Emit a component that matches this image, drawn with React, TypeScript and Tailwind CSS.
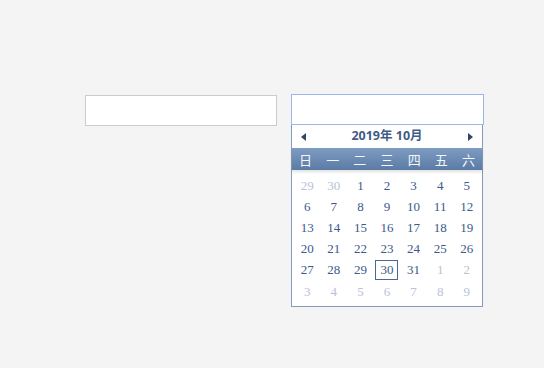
import React from "react";

const weeks: [string, boolean][][] = [
  [["29", true], ["30", true], ["1", false], ["2", false], ["3", false], ["4", false], ["5", false]],
  [["6", false], ["7", false], ["8", false], ["9", false], ["10", false], ["11", false], ["12", false]],
  [["13", false], ["14", false], ["15", false], ["16", false], ["17", false], ["18", false], ["19", false]],
  [["20", false], ["21", false], ["22", false], ["23", false], ["24", false], ["25", false], ["26", false]],
  [["27", false], ["28", false], ["29", false], ["30", false], ["31", false], ["1", true], ["2", true]],
  [["3", true], ["4", true], ["5", true], ["6", true], ["7", true], ["8", true], ["9", true]],
];

const days = ["日", "一", "二", "三", "四", "五", "六"];

export default function App() {
  return (
    <div className="w-[544px] h-[368px] bg-[#f4f4f4] pt-[95px] pl-[85px] flex gap-[14px] items-start">
      <div className="w-[192px] h-[31px] bg-white border border-[#cccccc]" />
      <div className="flex flex-col w-[193px] -mt-[1px]">
        <div className="h-[31px] bg-white border border-[#9bb7ea]" />
        <div className="w-[192px] border border-t-0 border-[#7f9cbd] bg-white pb-[4px]">
          <div className="h-[23px] flex items-center justify-between px-[9px]">
            <svg width="5" height="8" viewBox="0 0 5 8"><path d="M5 0L0 4l5 4z" fill="#2f4664" /></svg>
            <span className="text-[12.5px] font-bold text-[#3f5d86] leading-none" style={{ fontFamily: '"Noto Sans", "Noto Sans CJK SC", sans-serif' }}>2019年 10月</span>
            <svg width="5" height="8" viewBox="0 0 5 8"><path d="M0 0l5 4-5 4z" fill="#2f4664" /></svg>
          </div>
          <div className="h-[22px] bg-gradient-to-b from-[#7f9cc2] to-[#5b7ba5] grid grid-cols-7 items-center shadow-[0_2px_3px_rgba(0,0,0,0.12)]">
            {days.map((d) => (
              <span key={d} className="text-center text-[13px] text-[#f4f8fc] leading-none" style={{ fontFamily: '"Noto Sans CJK SC", sans-serif' }}>{d}</span>
            ))}
          </div>
          <div className="pt-[5px] px-[2px]">
            {weeks.map((w, i) => (
              <div key={i} className={`grid grid-cols-7 items-center ${i === 5 ? "h-[22px]" : "h-[21px]"}`}>
                {w.map(([n, muted], j) => {
                  const sel = i === 4 && j === 3;
                  return (
                    <div key={j} className="flex justify-center">
                      <span
                        className={`text-[13px] leading-none text-center ${muted ? "text-[#b7c2d5]" : "text-[#3c5a8a]"} ${sel ? "border border-[#4a6894] w-[23px] h-[20px] flex items-center justify-center" : ""}`}
                        style={{ fontFamily: '"Liberation Serif", serif' }}
                      >
                        {n}
                      </span>
                    </div>
                  );
                })}
              </div>
            ))}
          </div>
        </div>
      </div>
    </div>
  );
}
